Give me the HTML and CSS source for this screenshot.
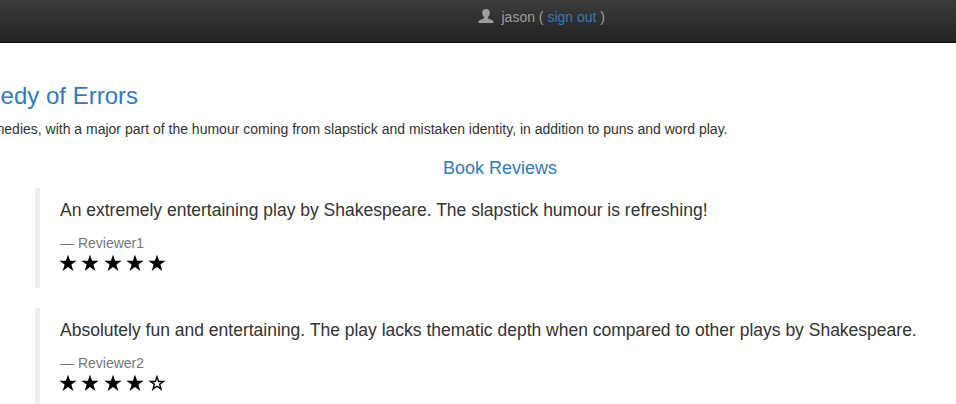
FILE: index.html
```html
<!DOCTYPE html>
<html lang="en">
<head>
<meta charset="utf-8">
<title>Book Reviews</title>
<link rel="stylesheet" href="styles.css">
</head>
<body>
<svg class="defs" aria-hidden="true">
  <symbol id="star" viewBox="0 0 18 18"><path d="M9 .8 11.1 6.8H17.7L12.4 10.6 14.3 17 9 13.1 3.7 17 5.6 10.6 .3 6.8H6.9Z"/></symbol>
  <symbol id="star-empty" viewBox="0 0 18 18"><path fill-rule="evenodd" d="M9 .8 11.1 6.8H17.7L12.4 10.6 14.3 17 9 13.1 3.7 17 5.6 10.6 .3 6.8H6.9ZM9 4.8 7.9 8.2H4.6L7.2 10.1 6.3 13.3 9 11.4 11.7 13.3 10.8 10.1 13.4 8.2H10.1Z"/></symbol>
</svg>
<nav class="navbar">
  <svg class="user" viewBox="0 0 16 16"><path d="M8 1C5.5 1 4.2 2.5 4.2 4.7 4.2 6.5 5 8 6 9 6.4 9.8 6.2 10.4 5.3 10.8L2 12C.9 12.5.5 13.2.5 15H15.5C15.5 13.2 15.1 12.5 14 12L10.7 10.8C9.8 10.4 9.6 9.8 10 9 11 8 11.8 6.5 11.8 4.7 11.8 2.5 10.5 1 8 1Z"/></svg>
  <span>jason ( <a>sign out</a> )</span>
</nav>
<main>
  <h3 class="title"><a>The Comedy of Errors</a></h3>
  <p class="summary">The Comedy of Errors is one of Shakespeare's early comedies, with a major part of the humour coming from slapstick and mistaken identity, in addition to puns and word play.</p>
  <h4 class="heading"><a>Book Reviews</a></h4>
  <blockquote>
    <p>An extremely entertaining play by Shakespeare. The slapstick humour is refreshing!</p>
    <footer>— Reviewer1</footer>
    <div class="stars"><svg><use href="#star"/></svg><svg><use href="#star"/></svg><svg><use href="#star"/></svg><svg><use href="#star"/></svg><svg><use href="#star"/></svg></div>
  </blockquote>
  <blockquote>
    <p>Absolutely fun and entertaining. The play lacks thematic depth when compared to other plays by Shakespeare.</p>
    <footer>— Reviewer2</footer>
    <div class="stars"><svg><use href="#star"/></svg><svg><use href="#star"/></svg><svg><use href="#star"/></svg><svg><use href="#star"/></svg><svg><use href="#star-empty"/></svg></div>
  </blockquote>
</main>
</body>
</html>
```
FILE: styles.css
```css
* { box-sizing: border-box; }
body { margin: 0; height: 404px; overflow: hidden; background: #fff; color: #333; font: 14px/20px "Liberation Sans", Arial, sans-serif; }
a { color: #337ab7; }
.defs { display: none; }
.navbar { display: flex; height: 43px; padding: 7px 0 0 478px; color: #9d9d9d; background: linear-gradient(#3c3c3c, #222); border-bottom: 1px solid #080808; }
.user { width: 16px; height: 16px; margin: 1px 7.5px 0 0; fill: #9d9d9d; }
main { padding: 39px 0 0; }
h3, h4, p { margin: 0; font-weight: normal; }
.title { display: flex; justify-content: flex-end; width: 138px; height: 26px; font-size: 24px; line-height: 27px; white-space: nowrap; }
.summary { display: flex; justify-content: flex-end; width: 727.5px; margin-top: 11px; white-space: nowrap; }
.heading { width: 1000px; margin: 19px 0 10px; font-size: 18px; line-height: 20px; text-align: center; }
blockquote { height: 100px; margin: 0 0 20px 35px; padding: 10px 20px; border-left: 5px solid #eee; white-space: nowrap; }
blockquote p { margin-bottom: 10px; font-size: 17.5px; line-height: 25px; }
blockquote footer { height: 20px; color: #777; }
.stars { display: flex; gap: 4.3px; height: 18px; margin: 1px 0 0 -1px; }
.stars svg { width: 18px; height: 18px; fill: #000; }
```
